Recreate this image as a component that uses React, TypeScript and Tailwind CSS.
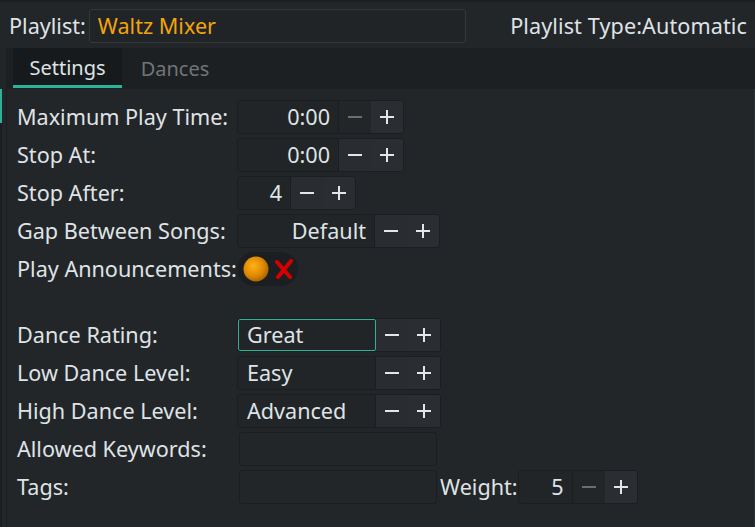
import React from "react";

const Minus = ({ disabled }: { disabled?: boolean }) => (
  <svg width="16" height="16" viewBox="0 0 16 16">
    <rect x="1" y="7" width="14" height="2" fill={disabled ? "#6a6e72" : "#e3e6e8"} />
  </svg>
);
const Plus = () => (
  <svg width="16" height="16" viewBox="0 0 16 16">
    <rect x="1" y="7" width="14" height="2" fill="#e3e6e8" />
    <rect x="7" y="1" width="2" height="14" fill="#e3e6e8" />
  </svg>
);

function Spin({
  value,
  textW,
  minusDisabled,
  align = "right",
  focused,
}: {
  value: string;
  textW: number;
  minusDisabled?: boolean;
  align?: "left" | "right";
  focused?: boolean;
}) {
  return (
    <div className="flex h-[34px] rounded-[3px] border border-[#1b1e20] overflow-hidden">
      <div
        style={{ width: textW }}
        className={
          "h-full flex items-center bg-[#212528] " +
          (align === "right" ? "justify-end pr-[8px]" : focused ? "justify-start pl-[8px]" : "justify-start pl-[9px]") +
          (focused ? " border border-[#2eb398] rounded-[2px]" : " border-r border-[#1b1e20]")
        }
      >
        {value}
      </div>
      <div
        className={
          "w-[32px] h-full flex items-center justify-center " +
          (minusDisabled ? "bg-[#222629]" : "bg-[#292d31]")
        }
      >
        <Minus disabled={minusDisabled} />
      </div>
      <div className="w-[32px] h-full flex items-center justify-center bg-[#2a2e32]">
        <Plus />
      </div>
    </div>
  );
}

function Row({ label, children, h = 34 }: { label: string; children?: React.ReactNode; h?: number }) {
  return (
    <div className="flex items-center" style={{ height: h }}>
      <div className="w-[220px] shrink-0 whitespace-nowrap">{label}</div>
      {children}
    </div>
  );
}

export default function App() {
  return (
    <div className="w-[755px] h-[527px] overflow-hidden bg-[#232629] text-[#dfe3e6] font-['Noto_Sans',sans-serif] text-[21.6px] leading-none flex flex-col border-t-[2px] border-[#1b1e20]">
      {/* top row */}
      <div className="h-[46px] flex items-center pt-[2px] pl-[9px] pr-[8px] shrink-0">
        <span className="whitespace-nowrap">Playlist:</span>
        <div className="ml-[3px] w-[377px] h-[34px] rounded-[3px] border border-[#33383c] bg-[#202427] flex items-center pl-[8px] text-[#f4a30b]">
          Waltz Mixer
        </div>
        <div className="flex-1" />
        <span className="whitespace-nowrap tracking-[0.1px]">Playlist Type:Automatic</span>
      </div>

      {/* tab bar */}
      <div className="ml-[6px] h-[40px] bg-[#1d2023] flex pl-[7px] shrink-0 text-[20px]">
        <div className="w-[109px] h-full bg-[#171a1c] border-b-[3px] border-[#2eb398] flex items-center justify-center pt-[3px]">
          Settings
        </div>
        <div className="w-[106px] h-full flex items-center justify-center text-[#6f7578] pt-[1px]">Dances</div>
      </div>

      {/* panel */}
      <div className="flex-1 flex border-t border-[#1f2224]">
        <div className="w-[2px] flex flex-col bg-[#1b1e20]">
          <div className="h-[34px] bg-[#2eb398]" />
        </div>
        <div className="w-[4px]" />
        <div className="w-[1px] bg-[#1c1f21]" />
        <div className="flex-1 flex flex-col gap-[4px] pt-[11px] pl-[10px]">
          <Row label="Maximum Play Time:">
            <Spin value="0:00" textW={101} minusDisabled />
          </Row>
          <Row label="Stop At:">
            <Spin value="0:00" textW={101} />
          </Row>
          <Row label="Stop After:">
            <Spin value="4" textW={53} />
          </Row>
          <Row label="Gap Between Songs:">
            <Spin value="Default" textW={137} />
          </Row>
          <Row label="Play Announcements:">
            <div className="w-[61px] h-[34px] rounded-full bg-[#1c1f22] flex items-center pl-[6px] gap-[6px]">
              <svg width="26" height="26" viewBox="0 0 26 26">
                <defs>
                  <radialGradient id="ball" cx="0.4" cy="0.38" r="0.65">
                    <stop offset="0" stopColor="#ffb21a" />
                    <stop offset="0.6" stopColor="#e08a00" />
                    <stop offset="1" stopColor="#a86400" />
                  </radialGradient>
                </defs>
                <circle cx="13" cy="13" r="12.5" fill="url(#ball)" />
              </svg>
              <svg width="18" height="20" viewBox="0 0 18 20">
                <path d="M2 3 L15 18" stroke="#d40000" strokeWidth="4" strokeLinecap="round" />
                <path d="M16 2 L3 18" stroke="#d40000" strokeWidth="4" strokeLinecap="round" />
              </svg>
            </div>
          </Row>
          <div className="h-[24px]" />
          <Row label="Dance Rating:">
            <Spin value="Great" textW={138} align="left" focused />
          </Row>
          <Row label="Low Dance Level:">
            <Spin value="Easy" textW={138} align="left" />
          </Row>
          <Row label="High Dance Level:">
            <Spin value="Advanced" textW={138} align="left" />
          </Row>
          <Row label="Allowed Keywords:">
            <div className="ml-[2px] w-[198px] h-[34px] rounded-[3px] border border-[#1b1e20] bg-[#222629]" />
          </Row>
          <Row label="Tags:">
            <div className="ml-[2px] w-[198px] h-[34px] rounded-[3px] border border-[#1b1e20] bg-[#222629]" />
            <span className="ml-[3px] whitespace-nowrap">Weight:</span>
            <Spin value="5" textW={54} minusDisabled />
          </Row>
        </div>
        <div className="w-[1px] bg-[#2b3336]" />
      </div>
    </div>
  );
}
